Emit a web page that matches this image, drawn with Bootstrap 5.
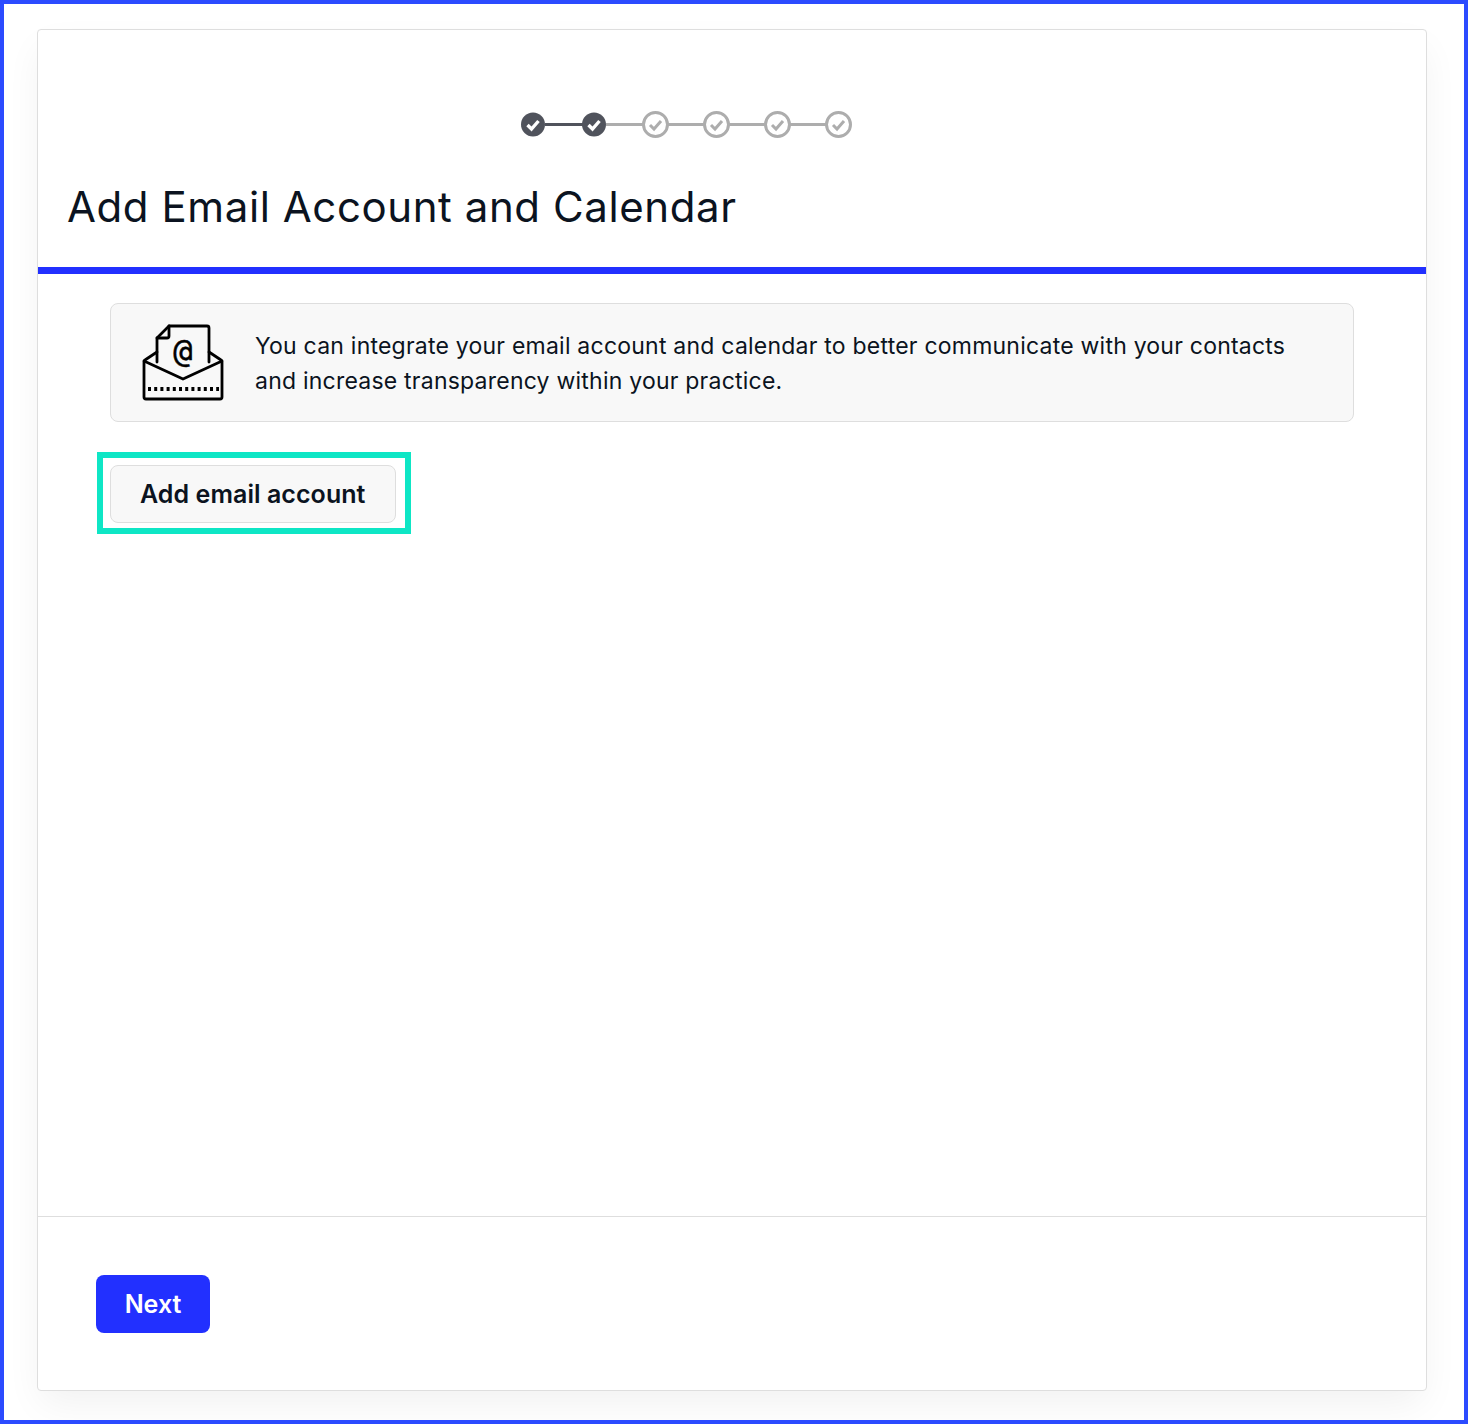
<!DOCTYPE html>
<html lang="en">
<head>
    <meta charset="UTF-8">
    <meta name="viewport" content="width=device-width, initial-scale=1.0">
    <title>Add Email Account and Calendar</title>
    <link href="https://cdn.jsdelivr.net/npm/bootstrap@5.3.2/dist/css/bootstrap.min.css" rel="stylesheet">
    <script src="https://cdn.jsdelivr.net/npm/bootstrap@5.3.2/dist/js/bootstrap.bundle.min.js"></script>
    <style>
        html, body {
            height: 100%;
        }
        body {
            border: 4px solid #2b4bff;
            background: #fff;
            font-family: Inter, "Liberation Sans", sans-serif;
            color: #0b1320;
            padding: 25px 37px 29px 33px;
        }
        .setup-card {
            height: 100%;
            border: 1px solid #dedede;
            border-radius: 4px;
            box-shadow: 0 16px 36px -4px rgba(0, 0, 0, .06);
        }
        .setup-head {
            height: 244px;
            padding: 80px 30px 0;
            border-bottom: 7px solid #2230ff;
        }
        .step-row {
            height: 28px;
            padding-right: 92px;
        }
        .step-line {
            width: 38px;
            height: 3px;
            margin: 0 -2px;
            background: #adadad;
        }
        .step-line.done {
            background: #50535c;
        }
        .step-icon {
            position: relative;
            width: 27px;
            height: 27px;
            flex: none;
        }
        .setup-title {
            margin: 44px 0 0 -1px;
            font-size: 42px;
            line-height: 50px;
            font-weight: 400;
            letter-spacing: .58px;
        }
        .setup-body {
            padding: 29px 72px 0;
        }
        .info-box {
            height: 119px;
            padding: 3px 32px 0 29px;
            border: 1px solid #dedede;
            border-radius: 8px;
            background: #f8f8f8;
            font-size: 23px;
            line-height: 35px;
            letter-spacing: .225px;
        }
        .info-icon {
            width: 86px;
            height: 80px;
            flex: none;
            margin: -4px 29px 0 0;
        }
        .add-highlight {
            display: inline-block;
            margin: 30px 0 0 -13px;
            padding: 7px 9px 5px 7px;
            border: 6px solid #0ee6c5;
        }
        .add-btn {
            display: block;
            height: 58px;
            padding: 2px 29px 0;
            border: 1px solid #dedede;
            border-radius: 8px;
            background: #f8f8f8;
            color: #0b1320;
            font-size: 25px;
            font-weight: 600;
            letter-spacing: .06px;
        }
        .setup-foot {
            height: 174px;
            padding: 58px;
            border-top: 1px solid #dedede;
        }
        .next-btn {
            display: block;
            height: 58px;
            width: 114px;
            padding: 2px 0 0;
            border: 0;
            border-radius: 8px;
            background: #2230ff;
            color: #fff;
            font-size: 25px;
            font-weight: 600;
        }
    </style>
</head>
<body>
    <div class="setup-card d-flex flex-column bg-white">
        <!-- Header with steps -->
        <div class="setup-head">
            <div class="step-row d-flex justify-content-center align-items-center">
                <svg class="step-icon" viewBox="0 0 27 27"><circle cx="13" cy="13.5" r="12" fill="#50535c"/><path d="M7.5 14l4 4L18.5 10" fill="none" stroke="#fff" stroke-width="3.4"/></svg>
                <div class="step-line done"></div>
                <svg class="step-icon" viewBox="0 0 27 27"><circle cx="13" cy="13.5" r="12" fill="#50535c"/><path d="M7.5 14l4 4L18.5 10" fill="none" stroke="#fff" stroke-width="3.4"/></svg>
                <div class="step-line"></div>
                <svg class="step-icon" viewBox="0 0 27 27"><circle cx="13.5" cy="13.5" r="12" fill="#fff" stroke="#adadad" stroke-width="3"/><path d="M8 14l4 4L19 10" fill="none" stroke="#adadad" stroke-width="3"/></svg>
                <div class="step-line"></div>
                <svg class="step-icon" viewBox="0 0 27 27"><circle cx="13.5" cy="13.5" r="12" fill="#fff" stroke="#adadad" stroke-width="3"/><path d="M8 14l4 4L19 10" fill="none" stroke="#adadad" stroke-width="3"/></svg>
                <div class="step-line"></div>
                <svg class="step-icon" viewBox="0 0 27 27"><circle cx="13.5" cy="13.5" r="12" fill="#fff" stroke="#adadad" stroke-width="3"/><path d="M8 14l4 4L19 10" fill="none" stroke="#adadad" stroke-width="3"/></svg>
                <div class="step-line"></div>
                <svg class="step-icon" viewBox="0 0 27 27"><circle cx="13.5" cy="13.5" r="12" fill="#fff" stroke="#adadad" stroke-width="3"/><path d="M8 14l4 4L19 10" fill="none" stroke="#adadad" stroke-width="3"/></svg>
            </div>
            <h1 class="setup-title">Add Email Account and Calendar</h1>
        </div>

        <!-- Main content -->
        <div class="setup-body flex-grow-1">
            <div class="info-box d-flex align-items-center">
                <svg class="info-icon" viewBox="140 322 86 80" fill="none" stroke="#000" stroke-width="2.8" stroke-linejoin="round" stroke-linecap="round">
                    <path d="M157 362V338L169 326H207a2 2 0 0 1 2 2V362"/>
                    <path d="M157 338H167a2 2 0 0 0 2-2V326"/>
                    <path d="M157 352L145 360a2 2 0 0 0-1 2V397a2 2 0 0 0 2 2H220a2 2 0 0 0 2-2V362a2 2 0 0 0-1-2L209 352"/>
                    <path d="M144 361L183 379L222 361"/>
                    <path d="M148 389H219" stroke-dasharray="3 3.2" stroke-linecap="butt" stroke-width="4"/>
                    <text x="183" y="362" text-anchor="middle" font-family="DejaVu Sans Mono, monospace" font-size="32" fill="#000" stroke="#000" stroke-width=".5">@</text>
                </svg>
                <div>You can integrate your email account and calendar to better communicate with your contacts and increase transparency within your practice.</div>
            </div>
            <div class="add-highlight">
                <button type="button" class="btn add-btn">Add email account</button>
            </div>
        </div>

        <!-- Footer -->
        <div class="setup-foot">
            <button type="button" class="btn next-btn">Next</button>
        </div>
    </div>
</body>
</html>
